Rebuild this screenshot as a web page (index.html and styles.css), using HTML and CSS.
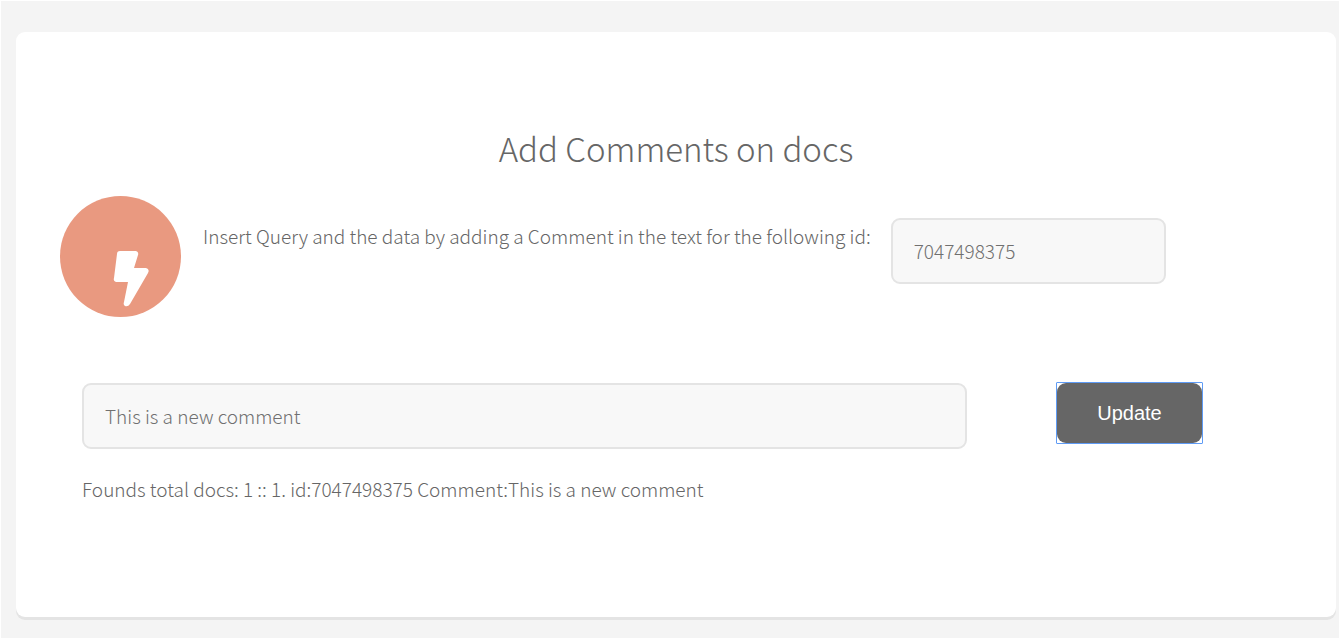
FILE: index.html
```html
<!DOCTYPE html>
<html lang="en">
<head>
<meta charset="utf-8">
<title>Add Comments on docs</title>
<link rel="stylesheet" href="styles.css">
</head>
<body>
<main class="card">
  <h1 class="title">Add Comments on docs</h1>
  <form class="form">
    <div class="query-row">
      <span class="badge">
        <svg class="bolt" viewBox="0 0 36 56" aria-hidden="true"><path d="M7 0H23Q26 1 25 4L21 17H33Q37 18 35 22L17 53Q15 56 12 55Q10 54 11 51L15 31H3Q0 30 1 27L4 3Q4 0 7 0Z"/></svg>
      </span>
      <label class="query-label" for="doc-id">Insert Query and the data by adding a Comment in the text for the following id:</label>
      <input class="field id-field" id="doc-id" type="text" value="7047498375">
    </div>
    <div class="comment-row">
      <input class="field comment-field" type="text" aria-label="Comment" value="This is a new comment">
      <span class="focus-frame"><button class="update" type="button">Update</button></span>
    </div>
    <p class="result">Founds total docs: 1 :: 1. id:7047498375 Comment:This is a new comment</p>
  </form>
</main>
</body>
</html>
```
FILE: styles.css
```css
* { box-sizing: border-box; }

html { background: #fff; }

body {
  margin: 0;
  min-height: 100vh;
  padding: 31px 3px 21px 15px;
  border: 1px solid #fff;
  background: #f4f4f4;
  background-clip: padding-box;
  color: #666;
  font: 300 19px/36px "Noto Sans CJK SC", "Open Sans", sans-serif;
  display: flex;
}

.card {
  flex: 1;
  padding: 88px 44px 0;
  border-radius: 9px;
  background: #fff;
  box-shadow: 0 3px 0 #e4e4e4;
}

.title {
  margin: 0;
  font-size: 33px;
  font-weight: 300;
  line-height: 56px;
  text-align: center;
}

.query-row {
  display: flex;
  align-items: flex-start;
  margin-top: 20px;
}

.badge {
  flex: none;
  width: 121px;
  height: 121px;
  padding: 55px 0 0 53px;
  border-radius: 50%;
  background: #e99980;
}

.bolt {
  display: block;
  width: 36px;
  height: 56px;
  fill: #fff;
}

.query-label {
  margin: 22px 0 0 22px;
  white-space: nowrap;
}

.field {
  height: 66px;
  padding: 0 22px 2px 21px;
  border: 2px solid #e4e4e4;
  border-radius: 9px;
  background: #f8f8f8;
  color: #707070;
  font: inherit;
}

.id-field {
  width: 275px;
  margin: 22px 0 0 20px;
}

.comment-row {
  display: flex;
  align-items: flex-start;
  gap: 89px;
  margin: 65px 89px 0 22px;
}

.comment-field {
  flex: 1;
  min-width: 0;
  margin-top: 1px;
}

.focus-frame {
  display: flex;
  border: 1px solid #5e9bf5;
  border-radius: 1px;
}

.update {
  width: 145px;
  height: 60px;
  border: 0;
  border-radius: 9px;
  background: #666;
  color: #fff;
  font: 20px "Liberation Sans", Arial, sans-serif;
}

.result { margin: 22px 22px 0; }
```
